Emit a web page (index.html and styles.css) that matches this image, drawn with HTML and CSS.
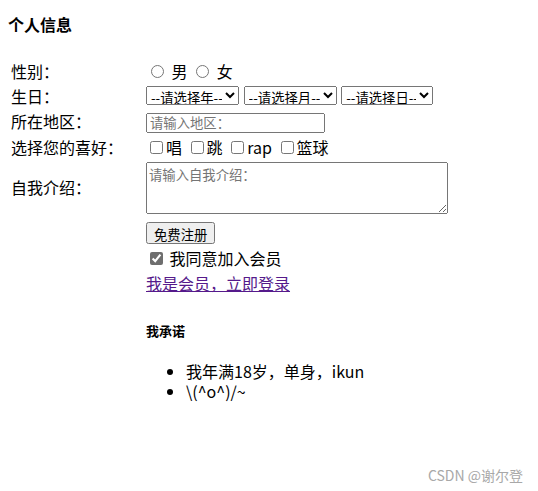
FILE: index.html
```html
<!DOCTYPE html>
<html lang="zh">
<head>
<meta charset="utf-8">
<title>个人信息</title>
<link rel="stylesheet" href="styles.css">
</head>
<body>
<h4 class="title">个人信息</h4>
<table class="form-table">
  <tr>
    <td class="label">性别：</td>
    <td>
      <input type="radio" name="sex" id="m"> <label for="m" class="sex">男</label>
      <input type="radio" name="sex" id="f"> <label for="f" class="sex">女</label>
    </td>
  </tr>
  <tr>
    <td class="label">生日：</td>
    <td>
      <select class="sel sel-year"><option>--请选择年--</option></select>
      <select class="sel sel-month"><option>--请选择月--</option></select>
      <select class="sel sel-day"><option>--请选择日--</option></select>
    </td>
  </tr>
  <tr>
    <td class="label">所在地区：</td>
    <td><input type="text" class="txt" placeholder="请输入地区："></td>
  </tr>
  <tr>
    <td class="label">选择您的喜好：</td>
    <td>
      <input type="checkbox" id="h1"><label for="h1" class="hobby">唱</label>
      <input type="checkbox" id="h2"><label for="h2" class="hobby">跳</label>
      <input type="checkbox" id="h3"><label for="h3" class="hobby">rap</label>
      <input type="checkbox" id="h4"><label for="h4" class="hobby">篮球</label>
    </td>
  </tr>
  <tr>
    <td class="label">自我介绍：</td>
    <td><textarea class="area" placeholder="请输入自我介绍："></textarea></td>
  </tr>
  <tr>
    <td></td>
    <td class="btn-cell"><button class="btn">免费注册</button></td>
  </tr>
  <tr>
    <td></td>
    <td><input type="checkbox" id="agree" class="agree" checked> <label for="agree">我同意加入会员</label></td>
  </tr>
  <tr>
    <td></td>
    <td><a href="#" class="login">我是会员，立即登录</a></td>
  </tr>
  <tr>
    <td></td>
    <td>
      <h5 class="promise">我承诺</h5>
      <ul class="list">
        <li>我年满18岁，单身，ikun</li>
        <li>\(^o^)/~</li>
      </ul>
    </td>
  </tr>
</table>
<div class="watermark">CSDN @谢尔登</div>
</body>
</html>
```
FILE: styles.css
```css
body {
  margin: 8px;
  font-family: "Noto Sans CJK SC", "Noto Sans", sans-serif;
  font-size: 16px;
  line-height: 21px;
  color: #000;
  background: #fff;
}
.title {
  margin: 6px 0 23px;
  font-size: 16px;
  font-weight: 700;
}
.form-table {
  border-spacing: 2px;
}
.form-table td {
  padding: 1px;
}
.label {
  width: 131px;
}
input[type="radio"] {
  margin: 3px 3px 0 5px;
}
.sex {
  margin-left: 1px;
}
input[type="checkbox"] {
  margin: 3px 3px 3px 4px;
}
.hobby {
  margin-right: 1px;
}
.agree {
  accent-color: #6e6e6e;
}
.sel {
  font-family: "Noto Sans CJK SC", sans-serif;
  font-size: 13.33px;
  height: 19px;
  margin: 0 1px 0 0;
}
.sel-year {
  width: 93px;
}
.sel-month {
  width: 93px;
}
.sel-day {
  width: 92px;
}
.txt {
  font-family: "Noto Sans CJK SC", sans-serif;
  font-size: 13.33px;
  width: 171px;
  height: 14px;
  margin: 0;
}
.area {
  font-family: "Noto Sans CJK SC", sans-serif;
  font-size: 13.33px;
  width: 296px;
  height: 46px;
  margin: 0;
  vertical-align: middle;
}
.btn-cell {
  padding-top: 5px !important;
}
.btn {
  font-family: "Noto Sans CJK SC", sans-serif;
  font-size: 13.33px;
  height: 22px;
  margin: 0;
}
.login {
  color: #551a8b;
}
.promise {
  margin: 22px 0 20px;
  font-size: 13px;
  font-weight: 700;
}
.list {
  margin: 0;
  padding-left: 40px;
  line-height: 20px;
}
.watermark {
  position: absolute;
  right: 15px;
  top: 465px;
  font-size: 14px;
  color: #a8a8a8;
  font-family: "Noto Sans CJK SC", sans-serif;
}
```
